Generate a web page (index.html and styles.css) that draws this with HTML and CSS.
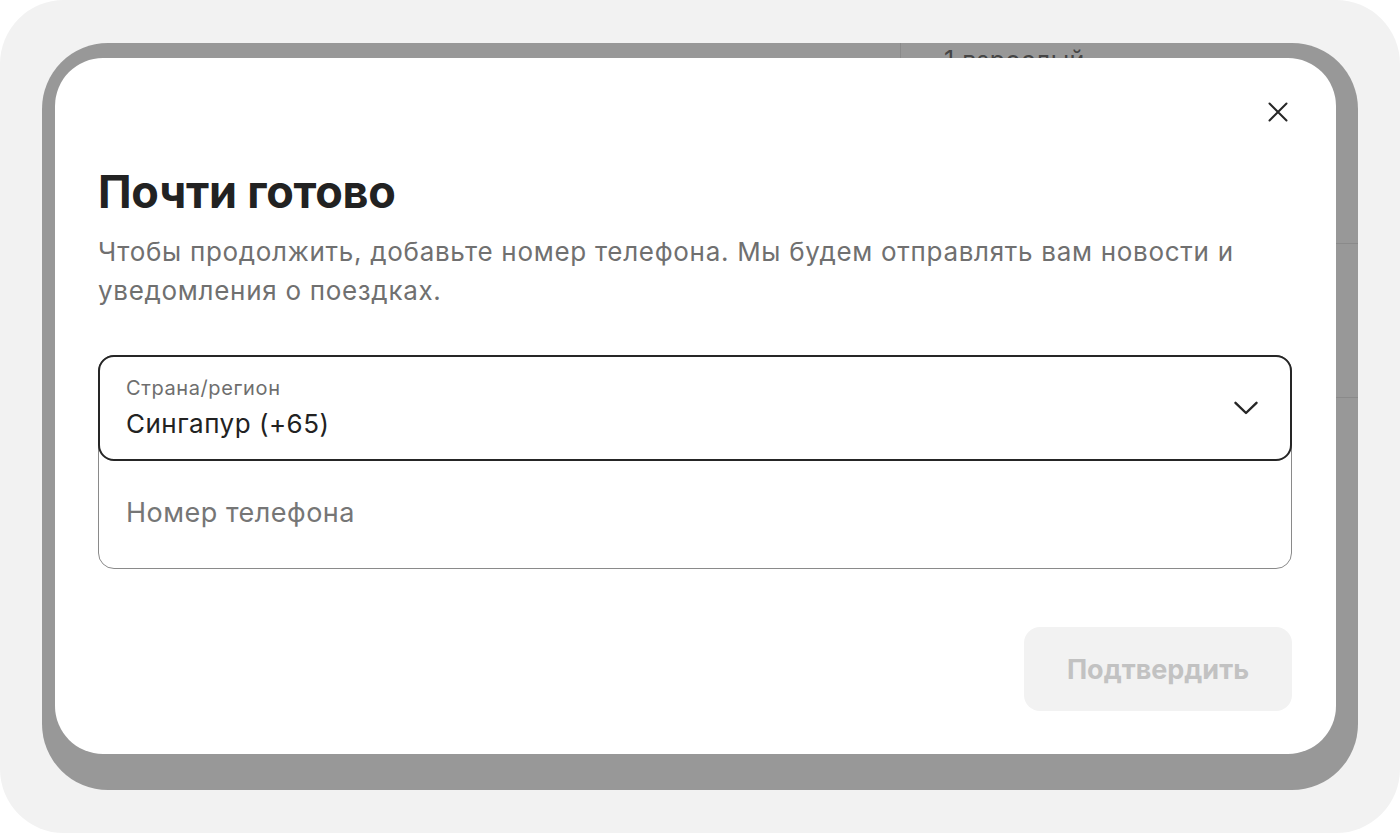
FILE: index.html
```html
<!DOCTYPE html>
<html lang="ru">
<head>
<meta charset="utf-8">
<title>Почти готово</title>
<link rel="stylesheet" href="styles.css">
</head>
<body>
<div class="screen">
  <div class="backdrop">
    <div class="bg-page">
      <div class="bg-head">
        <div class="bg-cell">1 взрослый</div>
      </div>
      <div class="bg-row"></div>
      <div class="bg-rest"></div>
    </div>
    <div class="modal" role="dialog" aria-labelledby="modal-title">
      <div class="modal-head">
        <button class="close" aria-label="Закрыть">
          <svg width="20" height="20" viewBox="0 0 20 20" fill="none" stroke="#262626" stroke-width="2" stroke-linecap="round"><path d="M1.5 1.5 18.5 18.5M18.5 1.5 1.5 18.5"/></svg>
        </button>
      </div>
      <h1 id="modal-title" class="title">Почти готово</h1>
      <p class="desc">Чтобы продолжить, добавьте номер телефона. Мы будем отправлять вам новости и уведомления о поездках.</p>
      <div class="phone-field">
        <div class="country">
          <div class="country-text">
            <span class="label">Страна/регион</span>
            <span class="value">Сингапур (+65)</span>
          </div>
          <svg class="chevron" width="24" height="14" viewBox="0 0 24 14" fill="none" stroke="#262626" stroke-width="2.4" stroke-linecap="round" stroke-linejoin="round"><path d="M1.5 1.8 12 12 22.5 1.8"/></svg>
        </div>
        <div class="phone">Номер телефона</div>
      </div>
      <div class="actions">
        <button class="confirm" disabled>Подтвердить</button>
      </div>
    </div>
  </div>
</div>
</body>
</html>
```

FILE: styles.css
```css
* { box-sizing: border-box; }
html, body { margin: 0; padding: 0; background: #ffffff; }
body { font-family: Inter, "Noto Sans", sans-serif; }

.screen {
  width: 1400px;
  height: 833px;
  background: #f2f2f2;
  border-radius: 64px;
  padding: 43px 42px 0 42px;
  overflow: hidden;
}

.backdrop {
  position: relative;
  width: 1316px;
  height: 747px;
  background: #989898;
  border-radius: 66px;
  overflow: hidden;
}

.bg-page { display: flex; flex-direction: column; height: 100%; }
.bg-head { height: 200px; display: flex; }
.bg-cell {
  margin-left: 858px;
  border-left: 1px solid #8a8a8a;
  padding: 2px 0 0 43px;
  font-size: 25px;
  line-height: 30px;
  letter-spacing: 0.5px;
  color: #454545;
  flex: 1;
}
.bg-row {
  margin-left: 858px;
  height: 155px;
  border-top: 1px solid #8a8a8a;
  border-bottom: 1px solid #8a8a8a;
}
.bg-rest { flex: 1; }

.modal {
  position: absolute;
  left: 13px;
  top: 15px;
  width: 1281px;
  height: 696px;
  background: #ffffff;
  border-radius: 48px;
  padding: 40px 44px 43px 43px;
  display: flex;
  flex-direction: column;
}

.modal-head { display: flex; justify-content: flex-end; height: 28px; }
.close {
  width: 28px;
  height: 28px;
  padding: 0;
  border: 0;
  background: transparent;
  display: flex;
  align-items: center;
  justify-content: center;
  cursor: pointer;
}

.title {
  margin: 41px 0 0 0;
  font-size: 45px;
  line-height: 50px;
  font-weight: 700;
  color: #222222;
  letter-spacing: -0.25px;
}

.desc {
  margin: 15px 0 0 0;
  font-size: 26px;
  line-height: 39px;
  letter-spacing: 0.7px;
  color: #707070;
  max-width: 1170px;
}

.phone-field {
  margin-top: 45px;
  height: 214px;
  border: 1px solid #8a8a8a;
  border-radius: 16px;
  display: flex;
  flex-direction: column;
}

.country {
  margin: -1px -1px 0 -1px;
  height: 106px;
  border: 2px solid #262626;
  border-radius: 16px;
  display: flex;
  align-items: center;
  justify-content: space-between;
  padding: 0 32px 0 26px;
}
.country-text {
  align-self: flex-start;
  display: flex;
  flex-direction: column;
  padding-top: 19px;
}
.label { font-size: 20px; line-height: 24px; letter-spacing: 0.6px; color: #6e6e6e; }
.value { margin-top: 8px; font-size: 26px; line-height: 32px; letter-spacing: 0.5px; color: #222222; }

.phone {
  flex: 1;
  display: flex;
  align-items: center;
  padding: 0 0 4px 27px;
  font-size: 27px;
  letter-spacing: 0.5px;
  color: #767676;
}

.actions { margin-top: auto; display: flex; justify-content: flex-end; }
.confirm {
  width: 268px;
  height: 84px;
  border: 0;
  border-radius: 16px;
  background: #f2f2f2;
  color: #c2c2c2;
  font-family: Inter, "Noto Sans", sans-serif;
  font-size: 27px;
  font-weight: 700;
}
```
